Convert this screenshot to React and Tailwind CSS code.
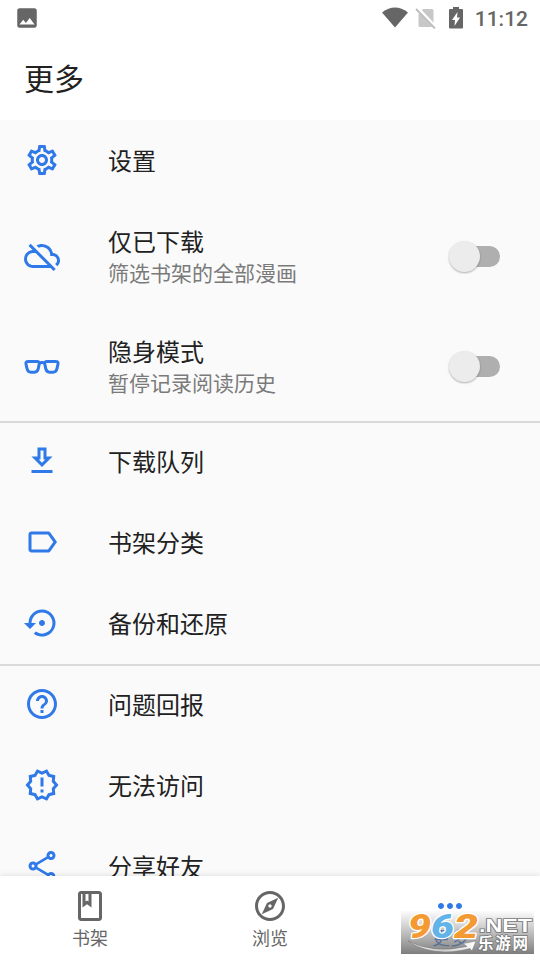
import {
  MdOutlineSettings,
  MdOutlineCloudOff,
  MdOutlineGetApp,
  MdLabelOutline,
  MdSettingsBackupRestore,
  MdHelpOutline,
  MdOutlineNewReleases,
  MdOutlineShare,
  MdOutlineExplore,
  MdMoreHoriz,
  MdImage,
} from 'react-icons/md'

function GlassesIcon() {
  return (
    <svg viewBox="0 -1 36 36" className="w-9 h-9" fill="none" stroke="currentColor" strokeWidth="3" strokeLinejoin="round">
      <path d="M3.8 12.5H13Q15.7 12.5 15.2 15L14.3 19.5Q13.5 23.2 10.5 23.2H7Q3.8 23.2 3 19.5L2 15Q1.5 12.5 4 12.5Z" />
      <path d="M32.2 12.5H23Q20.3 12.5 20.8 15L21.7 19.5Q22.5 23.2 25.5 23.2H29Q32.2 23.2 33 19.5L34 15Q34.5 12.5 32 12.5Z" />
      <path d="M15 14.2Q18 12.6 21 14.2" />
    </svg>
  )
}

function ShelfIcon() {
  return (
    <svg viewBox="0 0 24 24" className="w-9 h-9" fill="currentColor">
      <path d="M18 2H6c-1.1 0-2 .9-2 2v16c0 1.1.9 2 2 2h12c1.1 0 2-.9 2-2V4c0-1.1-.9-2-2-2zM9 4h2v5l-1-.75L9 9V4zm9 16H6V4h1v9l3-2.25L13 13V4h5v16z" />
    </svg>
  )
}

function Switch() {
  return (
    <div className="relative mr-10 h-[21px] w-[50px] rounded-full">
      <div className="ml-3 h-[21px] w-[38px] rounded-full bg-[#afafaf]" />
      <div className="absolute -left-px -top-[5px] h-[31px] w-[31px] rounded-full bg-[#ececec] shadow-[0_1px_2px_rgba(0,0,0,0.3)]" />
    </div>
  )
}

function Row({ icon: Icon, title, subtitle }) {
  return (
    <div className={`flex shrink-0 items-center pl-6 ${subtitle ? 'h-[110px]' : 'h-[81px]'}`}>
      <div className={`w-[84px] text-[#2f79e8] ${subtitle ? '' : 'pb-px'}`}>
        <Icon className="h-9 w-9" />
      </div>
      <div className={`flex-1 ${subtitle ? 'pt-1' : 'pt-0.5'}`}>
        <div className="text-2xl leading-8 text-[#212121]">{title}</div>
        {subtitle && <div className="text-[21px] leading-[31px] text-[#7a7a7a]">{subtitle}</div>}
      </div>
      {subtitle && <Switch />}
    </div>
  )
}

function StatusBar() {
  return (
    <div className="flex h-9 items-center justify-between pl-[14px] pr-3 text-[#666]">
      <MdImage className="h-[26px] w-[26px]" />
      <div className="flex items-center">
        <svg viewBox="0 0 26 22" className="mr-[7px] h-[22px] w-[26px]" fill="currentColor">
          <path d="M0 5.5Q13-4.5 26 5.5L13 20.5Z" />
        </svg>
        <svg viewBox="0 0 22 22" className="mr-[11px] h-[22px] w-[22px]">
          <path d="M8 2H17Q18.5 2 18.5 3.5V20H5Q3.5 20 3.5 18.5V7Z" fill="#c7c7c7" />
          <path d="M2 1L21 21" stroke="#fff" strokeWidth="4" />
          <path d="M1 2L20 21.5" stroke="#bdbdbd" strokeWidth="1.8" />
        </svg>
        <svg viewBox="0 0 16 22" className="mr-[11px] h-[22px] w-4">
          <path d="M5 0H11V2H14Q15 2 15 3V20.5Q15 21.5 14 21.5H2Q1 21.5 1 20.5V3Q1 2 2 2H5Z" fill="#666" />
          <path d="M9.5 5L4 13H7L6.5 19L12 10.5H9Z" fill="#fff" />
        </svg>
        <span className="pt-px font-['Roboto'] text-[21px] font-medium leading-6">11:12</span>
      </div>
    </div>
  )
}

function NavItem({ icon: Icon, label, active }) {
  return (
    <div className={`flex flex-1 flex-col items-center pt-3 ${active ? 'text-[#2f79e8]' : 'text-[#666]'}`}>
      <Icon className="h-9 w-9" />
      <span className="text-lg leading-[29px]">{label}</span>
    </div>
  )
}

function Watermark() {
  return (
    <svg viewBox="0 0 133 43" className="absolute bottom-[6px] right-[6px] h-[43px] w-[133px] overflow-visible">
      <defs>
        <linearGradient id="shade" x1="0" y1="0" x2="0" y2="1">
          <stop offset="0" stopColor="#777" stopOpacity="0.02" />
          <stop offset="1" stopColor="#6c6c6c" stopOpacity="0.88" />
        </linearGradient>
        <linearGradient id="swoosh" x1="0" y1="0" x2="1" y2="0">
          <stop offset="0" stopColor="#fff" />
          <stop offset="0.5" stopColor="#ccc" />
          <stop offset="1" stopColor="#fff" />
        </linearGradient>
      </defs>
      <rect width="133" height="43" fill="url(#shade)" />
      <path d="M7 30Q32 43 66 35.5L62 32.5L75 30L71 40L69 37.5Q32 47 7 30Z" fill="url(#swoosh)" stroke="#777" strokeWidth="0.5" />
      <g
        fontFamily="Roboto, sans-serif"
        fontSize="34"
        fontWeight="900"
        fontStyle="italic"
        stroke="#fff"
        strokeWidth="2.4"
        paintOrder="stroke"
        strokeLinejoin="round"
      >
        <text x="7" y="27" textLength="23" lengthAdjust="spacingAndGlyphs" fill="#f39a32">9</text>
        <text x="30" y="27" textLength="23" lengthAdjust="spacingAndGlyphs" fill="#62b3e8">6</text>
        <text x="53" y="27" textLength="24" lengthAdjust="spacingAndGlyphs" fill="#f39a32">2</text>
      </g>
      <g fill="#fff" stroke="#777" strokeWidth="1.6" paintOrder="stroke" fontWeight="bold">
        <text x="78" y="21" fontFamily="Liberation Sans, sans-serif" fontSize="18" textLength="53" lengthAdjust="spacingAndGlyphs">.NET</text>
        <text x="77" y="38" fontFamily="Noto Sans CJK SC, sans-serif" fontSize="15.5" textLength="50">乐游网</text>
      </g>
    </svg>
  )
}

function App() {
  return (
    <div className="relative flex h-[960px] w-[540px] flex-col overflow-hidden bg-white font-['Roboto','Noto_Sans_CJK_SC',sans-serif]">
      <StatusBar />
      <header className="flex h-[84px] shrink-0 items-center pl-6 pt-0.5">
        <h1 className="text-[30px] text-[#212121]">更多</h1>
      </header>

      <main className="flex min-h-0 flex-1 flex-col overflow-hidden bg-[#fafafa]">
        <Row icon={MdOutlineSettings} title="设置" />
        <Row icon={MdOutlineCloudOff} title="仅已下载" subtitle="筛选书架的全部漫画" />
        <Row icon={GlassesIcon} title="隐身模式" subtitle="暂停记录阅读历史" />
        <div className="-mb-0.5 h-0.5 shrink-0 bg-[#dadada]" />
        <Row icon={MdOutlineGetApp} title="下载队列" />
        <Row icon={MdLabelOutline} title="书架分类" />
        <Row icon={MdSettingsBackupRestore} title="备份和还原" />
        <div className="-mb-0.5 h-0.5 shrink-0 bg-[#dadada]" />
        <Row icon={MdHelpOutline} title="问题回报" />
        <Row icon={MdOutlineNewReleases} title="无法访问" />
        <Row icon={MdOutlineShare} title="分享好友" />
      </main>

      {/* Bottom navigation */}
      <nav className="z-10 flex h-[84px] shrink-0 bg-white shadow-[0_-1px_5px_rgba(0,0,0,0.1)]">
        <NavItem icon={ShelfIcon} label="书架" />
        <NavItem icon={MdOutlineExplore} label="浏览" />
        <NavItem icon={MdMoreHoriz} label="更多" active />
      </nav>
      <div className="absolute inset-0 z-20">
        <Watermark />
      </div>
    </div>
  )
}

export default App
